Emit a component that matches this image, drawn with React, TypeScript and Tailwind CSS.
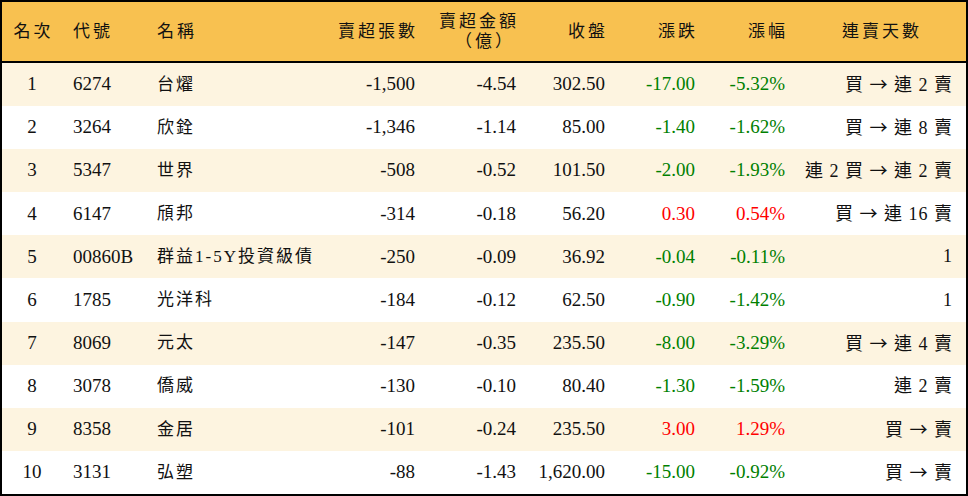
const rows = [
  ["1", "6274", "台燿", "-1,500", "-4.54", "302.50", "-17.00", "-5.32%", "買 → 連 2 賣"],
  ["2", "3264", "欣銓", "-1,346", "-1.14", "85.00", "-1.40", "-1.62%", "買 → 連 8 賣"],
  ["3", "5347", "世界", "-508", "-0.52", "101.50", "-2.00", "-1.93%", "連 2 買 → 連 2 賣"],
  ["4", "6147", "頎邦", "-314", "-0.18", "56.20", "0.30", "0.54%", "買 → 連 16 賣"],
  ["5", "00860B", "群益1-5Y投資級債", "-250", "-0.09", "36.92", "-0.04", "-0.11%", "1"],
  ["6", "1785", "光洋科", "-184", "-0.12", "62.50", "-0.90", "-1.42%", "1"],
  ["7", "8069", "元太", "-147", "-0.35", "235.50", "-8.00", "-3.29%", "買 → 連 4 賣"],
  ["8", "3078", "僑威", "-130", "-0.10", "80.40", "-1.30", "-1.59%", "連 2 賣"],
  ["9", "8358", "金居", "-101", "-0.24", "235.50", "3.00", "1.29%", "買 → 賣"],
  ["10", "3131", "弘塑", "-88", "-1.43", "1,620.00", "-15.00", "-0.92%", "買 → 賣"],
];

const cols = "grid grid-cols-[60px_84px_184px_95px_101px_89px_90px_90px_171px]";

// arrows need the CJK font, Liberation's one is tiny
function Streak({ text }: { text: string }) {
  const parts = text.split("→");
  return (
    <>
      {parts.map((p, i) => (
        <span key={i}>
          {p}
          {i < parts.length - 1 && (
            <span style={{ fontFamily: '"Noto Sans CJK TC", sans-serif' }}>→</span>
          )}
        </span>
      ))}
    </>
  );
}

export default function App() {
  return (
    <div
      className="w-[968px] h-[496px] flex flex-col border-2 border-black bg-white text-[#111]"
      style={{ fontFamily: '"Liberation Serif", "Noto Sans CJK TC", serif' }}
    >
      <div className={`${cols} h-[61px] shrink-0 bg-[#f8c150] border-b-2 border-black items-center text-[17px] tracking-[3px] leading-[20px]`}>
        <div className="text-center pl-[3px]">名次</div>
        <div className="pl-[11px]">代號</div>
        <div className="pl-[11px]">名稱</div>
        <div className="text-right pr-[7px]">賣超張數</div>
        <div className="text-right pr-[7px]">
          賣超金額
          <br />
          <span className="pr-[4px]">（億）</span>
        </div>
        <div className="text-right pr-[7px]">收盤</div>
        <div className="text-right pr-[7px]">漲跌</div>
        <div className="text-right pr-[7px]">漲幅</div>
        <div className="text-center pl-[3px]">連賣天數</div>
      </div>
      <div className="flex-1 flex flex-col">
        {rows.map((r, i) => {
          const up = !r[6].startsWith("-");
          const chg = up ? "text-[#ff0000]" : "text-[#008000]";
          return (
            <div
              key={r[0]}
              className={`${cols} flex-1 items-center text-[19px] ${i % 2 === 0 ? "bg-[#fdf4e0]" : "bg-white"}`}
            >
              <div className="text-center">{r[0]}</div>
              <div className="pl-[11px]">{r[1]}</div>
              <div className="pl-[11px] text-[17px] tracking-[2px]">{r[2]}</div>
              <div className="text-right pr-[10px]">{r[3]}</div>
              <div className="text-right pr-[10px]">{r[4]}</div>
              <div className="text-right pr-[10px]">{r[5]}</div>
              <div className={`text-right pr-[10px] ${chg}`}>{r[6]}</div>
              <div className={`text-right pr-[10px] ${chg}`}>{r[7]}</div>
              <div className="text-right pr-[13px] text-[18px] whitespace-pre tracking-[1px]">
                <Streak text={r[8]} />
              </div>
            </div>
          );
        })}
      </div>
    </div>
  );
}
